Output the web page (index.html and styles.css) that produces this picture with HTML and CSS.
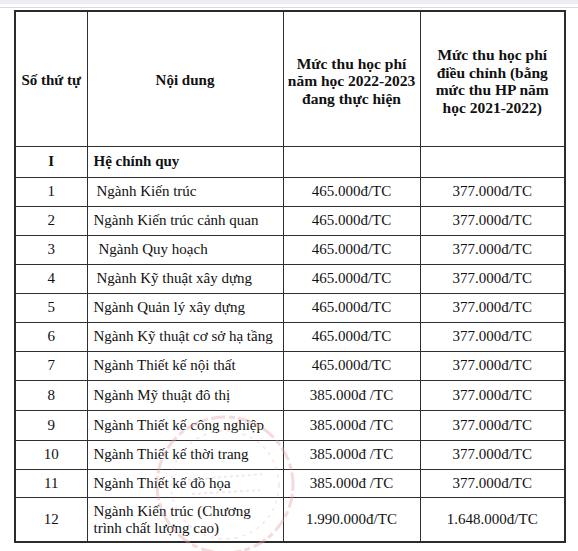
FILE: index.html
```html
<!DOCTYPE html>
<html lang="vi">
<head>
<meta charset="utf-8">
<title>Mức thu học phí</title>
<link rel="stylesheet" href="styles.css">
</head>
<body>
<div class="topbar"></div>
<div class="rule"></div>
<div class="sheet">
  <table class="fees">
    <colgroup>
      <col class="c1"><col class="c2"><col class="c3"><col class="c4">
    </colgroup>
    <thead>
      <tr class="head">
        <th class="h1">Số thứ tự</th>
        <th class="h1">Nội dung</th>
        <th>Mức thu học phí<br>năm học 2022-2023<br>đang thực hiện</th>
        <th class="h4">Mức thu học phí<br>điều chỉnh (bằng<br>mức thu HP năm<br>học 2021-2022)</th>
      </tr>
    </thead>
    <tbody>
      <tr class="sec"><td class="num b">I</td><td class="name b">Hệ chính quy</td><td></td><td></td></tr>
      <tr class="r29"><td class="num">1</td><td class="name ind">Ngành Kiến trúc</td><td class="val">465.000đ/TC</td><td class="val">377.000đ/TC</td></tr>
      <tr class="r29"><td class="num">2</td><td class="name">Ngành Kiến trúc cảnh quan</td><td class="val">465.000đ/TC</td><td class="val">377.000đ/TC</td></tr>
      <tr class="r29"><td class="num">3</td><td class="name ind2">Ngành Quy hoạch</td><td class="val">465.000đ/TC</td><td class="val">377.000đ/TC</td></tr>
      <tr class="r29"><td class="num">4</td><td class="name ind">Ngành Kỹ thuật xây dựng</td><td class="val">465.000đ/TC</td><td class="val">377.000đ/TC</td></tr>
      <tr class="r29"><td class="num">5</td><td class="name">Ngành Quản lý xây dựng</td><td class="val">465.000đ/TC</td><td class="val">377.000đ/TC</td></tr>
      <tr class="r29"><td class="num">6</td><td class="name">Ngành Kỹ thuật cơ sở hạ tầng</td><td class="val">465.000đ/TC</td><td class="val">377.000đ/TC</td></tr>
      <tr class="r29"><td class="num">7</td><td class="name">Ngành Thiết kế nội thất</td><td class="val">465.000đ/TC</td><td class="val">377.000đ/TC</td></tr>
      <tr class="r30"><td class="num">8</td><td class="name">Ngành Mỹ thuật đô thị</td><td class="val">385.000đ /TC</td><td class="val">377.000đ/TC</td></tr>
      <tr class="r30"><td class="num">9</td><td class="name">Ngành Thiết kế công nghiệp</td><td class="val">385.000đ /TC</td><td class="val">377.000đ/TC</td></tr>
      <tr class="r29"><td class="num">10</td><td class="name">Ngành Thiết kế thời trang</td><td class="val">385.000đ /TC</td><td class="val">377.000đ/TC</td></tr>
      <tr class="r28"><td class="num">11</td><td class="name">Ngành Thiết kế đồ họa</td><td class="val">385.000đ /TC</td><td class="val">377.000đ/TC</td></tr>
      <tr class="r44"><td class="num">12</td><td class="name two">Ngành Kiến trúc (Chương<br>trình chất lượng cao)</td><td class="val">1.990.000đ/TC</td><td class="val">1.648.000đ/TC</td></tr>
    </tbody>
  </table>
  <svg class="stamp" width="150" height="150" viewBox="0 0 150 150" aria-hidden="true">
    <circle cx="75" cy="75" r="68" fill="none" stroke="#e7a3a8" stroke-width="3" stroke-dasharray="6 3 14 4" opacity="0.4"/>
    <circle cx="75" cy="75" r="54" fill="none" stroke="#eab3b7" stroke-width="1.5" stroke-dasharray="3 5" opacity="0.35"/>
    <path d="M38 70 L112 64 M42 84 L110 80" stroke="#ecbcbf" stroke-width="2" stroke-dasharray="3 3" opacity="0.35"/>
  </svg>
</div>
</body>
</html>
```

FILE: styles.css
```css
html, body {
  margin: 0;
  padding: 0;
  background: #ffffff;
}
body {
  width: 578px;
  height: 551px;
  overflow: hidden;
  font-family: "Liberation Serif", "Times New Roman", serif;
  color: #111111;
}
.topbar {
  height: 4px;
  background: #eceef1;
}
.rule {
  height: 1px;
  margin-top: 3px;
  background: #dadbdd;
}
.sheet {
  position: relative;
  padding: 2px 0 0 14px;
}
.fees {
  border-collapse: collapse;
  table-layout: fixed;
  width: 550px;
  font-size: 15px;
  line-height: 17.5px;
  border: 2px solid #2b2b2b;
}
.c1 { width: 72px; }
.c2 { width: 196px; }
.c3 { width: 137px; }
.c4 { width: 145px; }
.fees th, .fees td {
  border: 1px solid #2f2f2f;
  padding: 0;
  vertical-align: middle;
}
.head th {
  height: 130px;
  font-weight: bold;
  font-size: 15.5px;
  text-align: center;
  padding-top: 4px;
}
.head .h1 { font-size: 15px; }
.head .h4 { padding-top: 4px; }
.sec td { height: 30px; }
.r28 td { height: 27px; }
.r29 td { height: 28px; }
.r30 td { height: 29px; }
.r44 td { height: 43px; }
.num { text-align: center; }
.b { font-weight: bold; }
.name {
  text-align: left;
  padding-left: 6px !important;
  white-space: nowrap;
}
.name.ind { padding-left: 9px !important; }
.name.ind2 { padding-left: 11px !important; }
.name.two { line-height: 17px; }
.val { text-align: center; }
.stamp {
  position: absolute;
  left: 150px;
  top: 402px;
  pointer-events: none;
}
```
